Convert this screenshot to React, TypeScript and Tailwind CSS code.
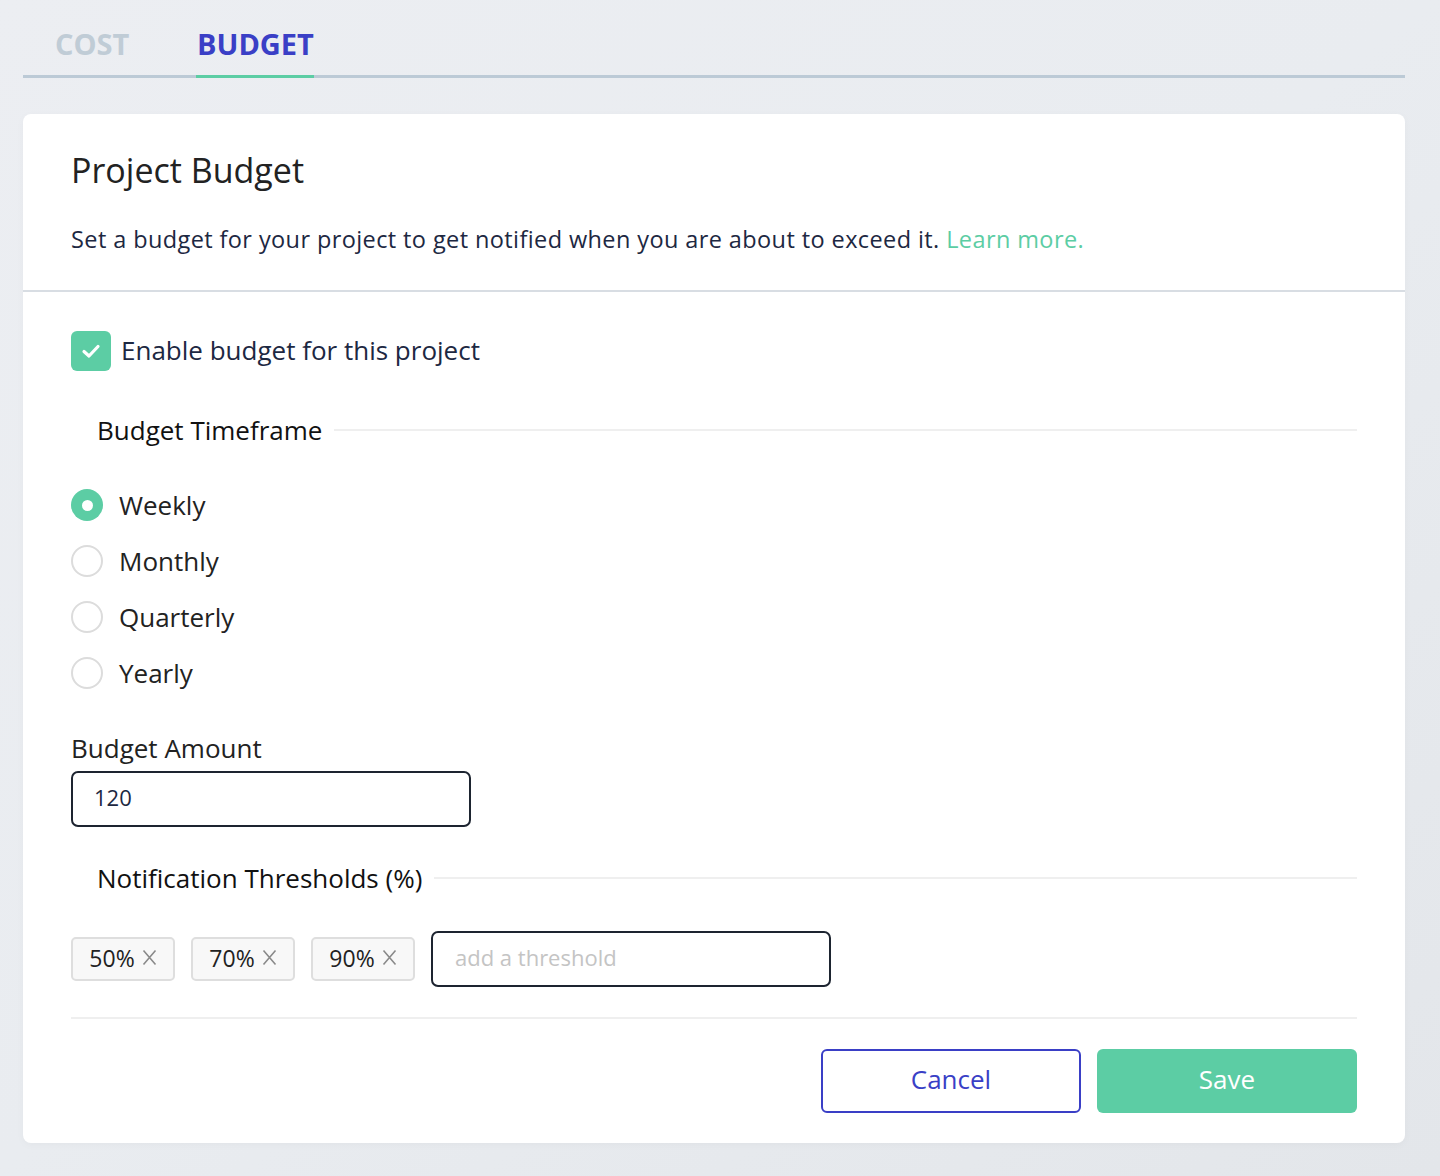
import React from "react";

const font = { fontFamily: "'Open Sans', Lato, sans-serif" };

function Radio({ label, checked }: { label: string; checked?: boolean }) {
  return (
    <div className="flex items-center h-[56px]">
      {checked ? (
        <span className="w-[32px] h-[32px] rounded-full bg-[#5ccda4] flex items-center justify-center">
          <span className="w-[11px] h-[11px] rounded-full bg-white" />
        </span>
      ) : (
        <span className="w-[32px] h-[32px] rounded-full border-2 border-[#dcdcdc] bg-white" />
      )}
      <span className="ml-[16px] text-[26px] leading-[32px] text-[#222]">{label}</span>
    </div>
  );
}

function Chip({ label }: { label: string }) {
  return (
    <div className="h-[44px] w-[104px] flex items-center justify-center gap-[7px] rounded-[5px] border-2 border-[#dedede] bg-[#f8f8f8] pb-[3px]">
      <span className="text-[23px] leading-[28px] text-[#222]">{label}</span>
      <svg width="15" height="17" viewBox="0 0 15 17" fill="none" stroke="#8a8a8a" strokeWidth="1.6">
        <path d="M1.5 1.5 L13.5 15.5 M13.5 1.5 L1.5 15.5" />
      </svg>
    </div>
  );
}

function Section({ title }: { title: string }) {
  return (
    <div className="flex items-center pl-[26px] h-[32px]">
      <span className="text-[26px] leading-[32px] text-[#111] whitespace-nowrap">{title}</span>
      <div className="flex-1 h-[2px] bg-[#efefef] ml-[12px]" />
    </div>
  );
}

export default function App() {
  return (
    <div className="w-[1440px] h-[1176px] bg-gradient-to-br from-[#eceef2] via-[#e9ecf0] to-[#e3e6ea] pl-[23px] pr-[35px] pt-[24px]" style={font}>
      {/* Tabs */}
      <div className="relative flex h-[54px] border-b-[3px] border-[#bccad6]">
        <div className="ml-[32px] w-[78px] text-[29px] font-bold text-[#c0ccd6] leading-none pt-[5px]">COST</div>
        <div className="relative ml-[63px] w-[118px] text-[29px] font-bold text-[#3a3fc6] leading-none pt-[5px] pl-[1px]">
          BUDGET
          <div className="absolute left-0 right-0 -bottom-[3px] h-[3px] bg-[#5ccda4]" />
        </div>
      </div>

      {/* Card */}
      <div className="mt-[36px] bg-white rounded-[8px] h-[1029px] shadow-[0_2px_8px_rgba(0,0,0,0.03)]">
        <div className="px-[48px] pt-[36px] h-[178px] border-b-2 border-[#d8dde3]">
          <h1 className="text-[34px] text-[#222] leading-[40px]">Project Budget</h1>
          <p className="mt-[34px] text-[23.5px] leading-[30px] tracking-[0.4px] text-[#1d2842] whitespace-nowrap">
            Set a budget for your project to get notified when you are about to exceed it.{" "}
            <span className="text-[#5ccda4]">Learn more.</span>
          </p>
        </div>

        <div className="px-[48px]">
          <div className="flex items-center mt-[39px]">
            <span className="w-[40px] h-[40px] rounded-[6px] bg-[#5ccda4] flex items-center justify-center">
              <svg width="20" height="16" viewBox="0 0 20 16" fill="none" stroke="white" strokeWidth="3.2" strokeLinecap="round" strokeLinejoin="round">
                <path d="M3 8.5 L8 13 L17 3.5" />
              </svg>
            </span>
            <span className="ml-[10px] text-[26px] leading-[32px] text-[#1d2842] -mt-[3px]">Enable budget for this project</span>
          </div>

          <div className="mt-[43px]">
            <Section title="Budget Timeframe" />
          </div>

          <div className="mt-[31px] flex flex-col">
            <Radio label="Weekly" checked />
            <Radio label="Monthly" />
            <Radio label="Quarterly" />
            <Radio label="Yearly" />
          </div>

          <div className="mt-[31px] text-[26px] text-[#222] leading-[32px]">Budget Amount</div>
          <div className="mt-[7px] w-[400px] h-[56px] rounded-[7px] border-2 border-[#1d2430] flex items-center px-[21px] pb-[3px] text-[22px] text-[#1d2842]">
            120
          </div>

          <div className="mt-[35px]">
            <Section title="Notification Thresholds (%)" />
          </div>

          <div className="mt-[37px] flex items-center gap-[16px]">
            <Chip label="50%" />
            <Chip label="70%" />
            <Chip label="90%" />
            <div className="w-[400px] h-[56px] rounded-[7px] border-2 border-[#1d2430] flex items-center px-[22px] pb-[3px] text-[22px] text-[#c4c4c4]">
              add a threshold
            </div>
          </div>

          <div className="mt-[30px] h-[2px] bg-[#efefef]" />

          <div className="mt-[30px] flex justify-end gap-[16px]">
            <button className="w-[260px] h-[64px] rounded-[6px] border-2 border-[#3a3fc6] bg-white text-[#3a3fc6] text-[26px] pb-[3px]">Cancel</button>
            <button className="w-[260px] h-[64px] rounded-[6px] bg-[#5ccda4] text-white text-[26px] pb-[3px]">Save</button>
          </div>
        </div>
      </div>
    </div>
  );
}
